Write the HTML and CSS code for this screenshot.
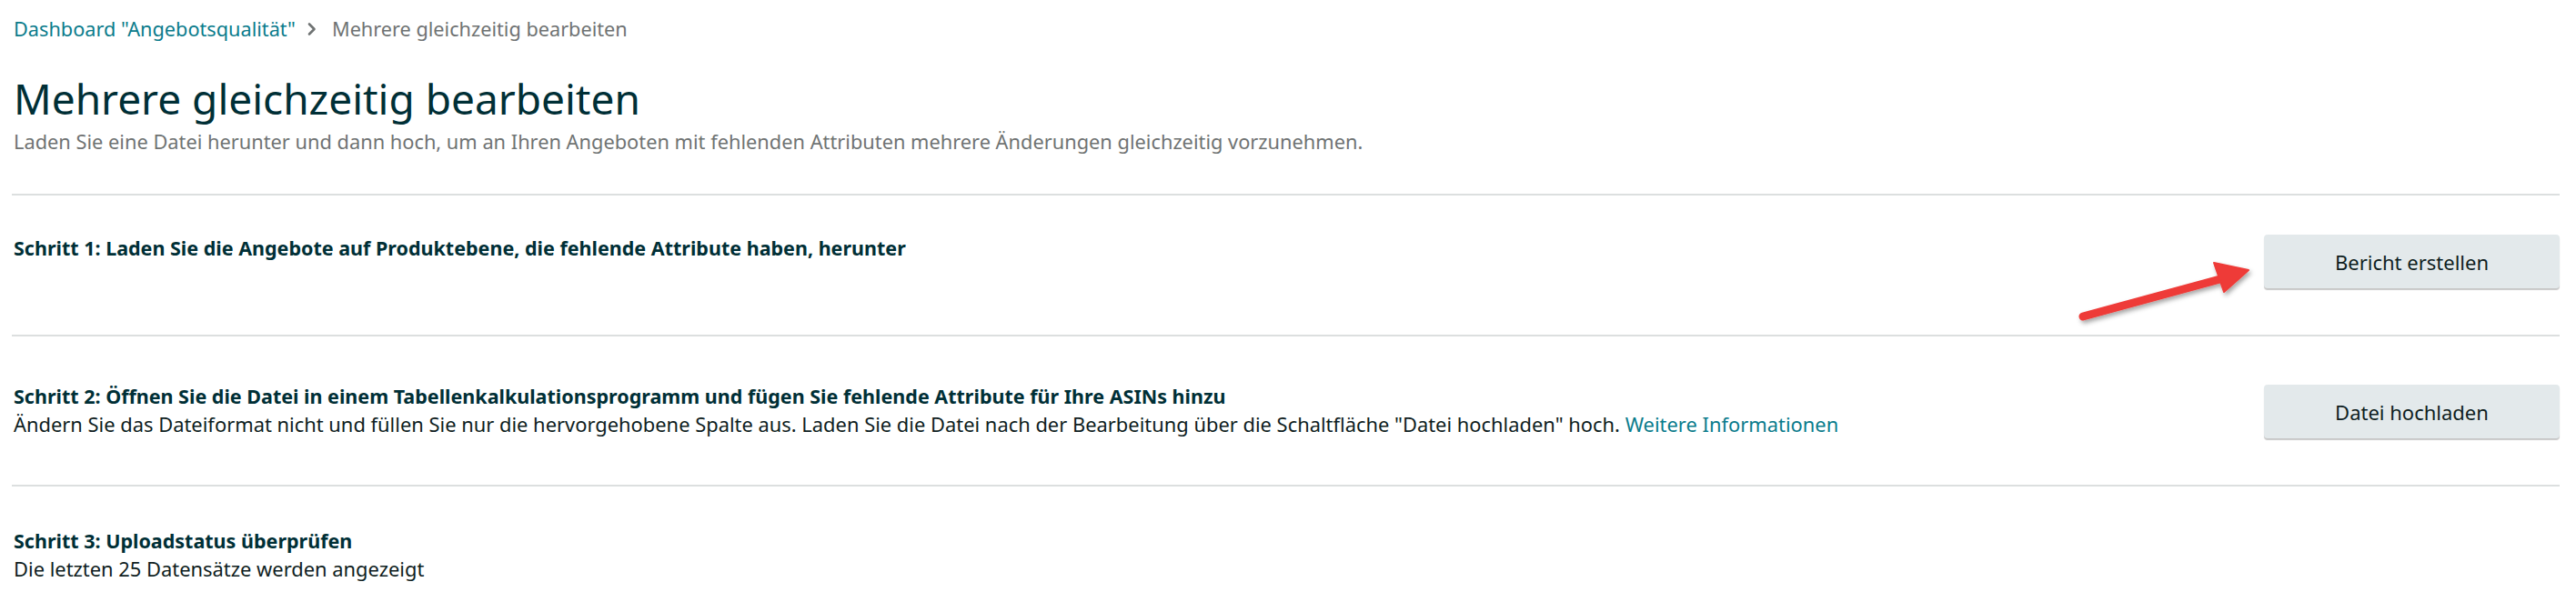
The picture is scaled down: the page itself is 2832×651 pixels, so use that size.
FILE: index.html
```html
<!DOCTYPE html>
<html lang="de">
<head>
    <meta charset="UTF-8">
    <meta name="viewport" content="width=device-width, initial-scale=1.0">
    <title>Mehrere gleichzeitig bearbeiten</title>
    <link rel="stylesheet" href="styles.css">
</head>
<body>
    <div class="page">
        <!-- Brotkrumen -->
        <div class="crumbs">
            <a href="#" class="crumb-link">Dashboard "Angebotsqualität"</a>
            <svg class="crumb-sep" width="12" height="16" viewBox="0 0 12 16">
                <polyline points="3,2.5 8.5,8 3,13.5" fill="none" stroke="#6f7373" stroke-width="2.6" stroke-linecap="round" stroke-linejoin="round"/>
            </svg>
            <span class="crumb-current">Mehrere gleichzeitig bearbeiten</span>
        </div>

        <h1 class="title">Mehrere gleichzeitig bearbeiten</h1>
        <p class="subtitle">Laden Sie eine Datei herunter und dann hoch, um an Ihren Angeboten mit fehlenden Attributen mehrere Änderungen gleichzeitig vorzunehmen.</p>

        <!-- Schritt 1 -->
        <div class="step step-one">
            <div class="step-text">
                <h2 class="step-title">Schritt 1: Laden Sie die Angebote auf Produktebene, die fehlende Attribute haben, herunter</h2>
            </div>
            <button class="btn">Bericht erstellen</button>
            <!-- roter Pfeil aus dem Screenshot -->
            <svg class="arrow" width="230" height="90" viewBox="0 0 230 90">
                <defs>
                    <filter id="shadow" x="-10%" y="-30%" width="130%" height="180%">
                        <feDropShadow dx="2" dy="3" stdDeviation="2.5" flood-color="#000" flood-opacity="0.35"/>
                    </filter>
                </defs>
                <g filter="url(#shadow)" fill="#ee3a37" stroke="#ee3a37">
                    <line x1="24" y1="69" x2="182" y2="26" stroke-width="9" stroke-linecap="round"/>
                    <polygon points="168,10 206,18 179,42" stroke-width="2" stroke-linejoin="round"/>
                </g>
            </svg>
        </div>

        <!-- Schritt 2 -->
        <div class="step step-two">
            <div class="step-text">
                <h2 class="step-title">Schritt 2: Öffnen Sie die Datei in einem Tabellenkalkulationsprogramm und fügen Sie fehlende Attribute für Ihre ASINs hinzu</h2>
                <p class="step-desc">Ändern Sie das Dateiformat nicht und füllen Sie nur die hervorgehobene Spalte aus. Laden Sie die Datei nach der Bearbeitung über die Schaltfläche "Datei hochladen" hoch. <a href="#" class="link">Weitere Informationen</a></p>
            </div>
            <button class="btn">Datei hochladen</button>
        </div>

        <!-- Schritt 3 -->
        <div class="step step-three">
            <div class="step-text">
                <h2 class="step-title">Schritt 3: Uploadstatus überprüfen</h2>
                <p class="step-desc">Die letzten 25 Datensätze werden angezeigt</p>
            </div>
        </div>
    </div>
</body>
</html>
```

FILE: styles.css
```css
*{
    margin: 0;
    padding: 0;
    box-sizing: border-box;
}
body{
    background: #fff;
    font-family: "Noto Sans", "Open Sans", Arial, sans-serif;
    color: #0f1e22;
    font-size: 22px;
    line-height: 31px;
}
.page{
    padding: 0 18px 0 13px;
}
.crumbs{
    display: flex;
    align-items: center;
    padding: 16px 0 0 2px;
    height: 47px;
    font-size: 21.7px;
}
.crumb-link{
    color: #0b7c8c;
    text-decoration: none;
}
.crumb-sep{
    margin: 0 16px 0 12px;
}
.crumb-current{
    color: #6f7373;
}
.title{
    margin-top: 33px;
    font-size: 46px;
    line-height: 56px;
    font-weight: 400;
    color: #002f36;
    padding-left: 2px;
}
.subtitle{
    margin-top: 5px;
    color: #6f7373;
    font-size: 21.8px;
    line-height: 30px;
    padding-left: 2px;
    margin-bottom: 42px;
}
.step{
    position: relative;
    display: flex;
    justify-content: space-between;
    align-items: flex-start;
    border-top: 2px solid #dcdfdf;
    padding: 42px 0 44px;
}
.step-one{
    min-height: 155px;
}
.step-two{
    padding-top: 50px;
    min-height: 165px;
}
.step-three{
    padding-top: 44px;
    padding-bottom: 0;
}
.step-text{
    padding-left: 2px;
}
.step-title{
    font-size: 21.5px;
    line-height: 31px;
    font-weight: 700;
    color: #002f36;
}
.step-desc{
    font-size: 21.9px;
    line-height: 31px;
}
.step-two .step-text{
    padding-bottom: 6px;
}
.link{
    color: #0b7c8c;
    text-decoration: none;
}
.btn{
    align-self: center;
    width: 325px;
    height: 59px;
    border: none;
    border-radius: 4px;
    background: #e3e9eb;
    box-shadow: 0 2px 1px rgba(0,0,0,.22);
    font-family: "Noto Sans", "Open Sans", Arial, sans-serif;
    font-size: 22px;
    color: #0f1e22;
    cursor: pointer;
}
.step-one .btn{
    margin-top: -6px;
}
.step-two .btn{
    margin-top: -4px;
}
.arrow{
    position: absolute;
    left: 2253px;
    top: 64px;
}
```
